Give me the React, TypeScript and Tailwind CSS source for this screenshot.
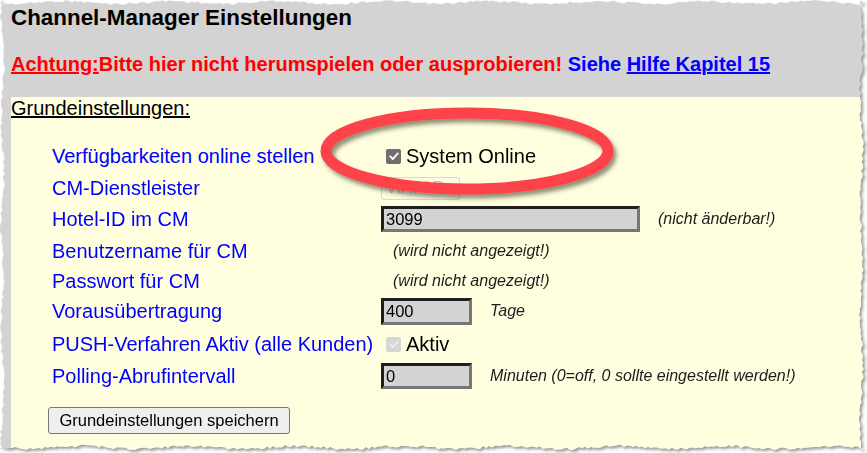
import type { ReactNode } from "react"

// deterministic noise for the torn paper edge
function noise(i: number) {
  const x = Math.sin(i * 12.9898 + 78.233) * 43758.5453
  return x - Math.floor(x)
}

function tornEdge(w: number, h: number) {
  const pts: string[] = []
  let k = 0
  const jag = (t: number, seed: number) =>
    2.6 + 1.4 * Math.sin(t / 17 + seed) + (noise(k++) - 0.5) * 2.6
  for (let x = 0; x <= w; x += 3) pts.push(`${x}px ${jag(x, 1).toFixed(1)}px`)
  for (let y = 0; y <= h; y += 3) pts.push(`${(w - jag(y, 2)).toFixed(1)}px ${y}px`)
  for (let x = w; x >= 0; x -= 3) pts.push(`${x}px ${(h - jag(x, 3)).toFixed(1)}px`)
  for (let y = h; y >= 0; y -= 3) pts.push(`${jag(y, 4).toFixed(1)}px ${y}px`)
  return `polygon(${pts.join(",")})`
}

function Row({ h, label, children }: { h: string; label: string; children?: ReactNode }) {
  return (
    <div className={`flex items-center ${h}`}>
      <div className="w-[329px] text-[20px] leading-[23px] text-[#0000ff]">{label}</div>
      <div className="flex items-center">{children}</div>
    </div>
  )
}

function Note({ children, className = "" }: { children: ReactNode; className?: string }) {
  return <span className={`text-[16px] italic leading-[18px] text-[#1c1c1c] ${className}`}>{children}</span>
}

function Check({ disabled = false }: { disabled?: boolean }) {
  return (
    <span
      className={`ml-[5px] flex size-[15px] items-center justify-center rounded-[2px] ${
        disabled ? "bg-[#d6d6d6]" : "bg-[#6f6f6f]"
      }`}
    >
      <svg viewBox="0 0 16 16" className="size-[12px]">
        <path
          d="M3 8.5 L6.5 12 L13 4.5"
          fill="none"
          stroke={disabled ? "#ececec" : "#ffffff"}
          strokeWidth="2.4"
          strokeLinecap="round"
          strokeLinejoin="round"
        />
      </svg>
    </span>
  )
}

function Field({ w, h, value }: { w: string; h: string; value: string }) {
  return (
    <div
      className={`${w} ${h} flex items-center border-[3px] border-t-[#1e1e1e] border-l-[#1e1e1e] border-r-[#767676] border-b-[#767676] bg-[#d3d3d3] pl-[2px] text-[16.5px] leading-none text-black`}
    >
      {value}
    </div>
  )
}

export default function App() {
  const clip = tornEdge(864, 450)

  return (
    <div className="min-h-screen bg-white font-['Liberation_Sans',Arial,sans-serif]">
      <div className="h-[450px] w-[864px] drop-shadow-[2px_2px_1.5px_rgba(0,0,0,0.4)]">
        <div className="relative flex h-full w-full flex-col bg-[#d3d3d3]" style={{ clipPath: clip }}>
          <div className="pb-[21px] pl-[11px] pt-[5px]">
            <h1 className="text-[22.4px] font-bold leading-[26px] text-black">Channel-Manager Einstellungen</h1>
            <p className="mt-[22px] text-[20px] font-bold leading-[23px]">
              <span className="text-[#ff0000] underline">Achtung:</span>
              <span className="text-[#ff0000]">Bitte hier nicht herumspielen oder ausprobieren!</span>{" "}
              <span className="text-[#0000ff]">Siehe </span>
              <span className="text-[#0000ff] underline">Hilfe Kapitel 15</span>
            </p>
          </div>

          <div className="ml-[11px] flex-1 bg-[#ffffe0]">
            <div className="text-[20px] leading-[23px] text-black underline">Grundeinstellungen:</div>

            <div className="mt-[20px] pl-[41px]">
              <Row h="h-[32px]" label="Verfügbarkeiten online stellen">
                <Check />
                <span className="ml-[5px] text-[20px] leading-[23px] text-black">System Online</span>
              </Row>
              <Row h="h-[32px]" label="CM-Dienstleister">
                <div className="flex h-[23px] w-[79px] items-center overflow-hidden rounded-[3px] border border-[#76767640] bg-[#efefef30] pl-[4px] text-[16px] text-[#10101040]">
                  VIATOR
                </div>
              </Row>
              <Row h="h-[30px]" label="Hotel-ID im CM">
                <Field w="w-[259px]" h="h-[26px]" value="3099" />
                <Note className="ml-[18px]">(nicht änderbar!)</Note>
              </Row>
              <Row h="h-[34px]" label="Benutzername für CM">
                <Note className="ml-[12px]">(wird nicht angezeigt!)</Note>
              </Row>
              <Row h="h-[26px]" label="Passwort für CM">
                <Note className="ml-[12px]">(wird nicht angezeigt!)</Note>
              </Row>
              <Row h="h-[34px]" label="Vorausübertragung">
                <Field w="w-[91px]" h="h-[27px]" value="400" />
                <Note className="ml-[18px]">Tage</Note>
              </Row>
              <Row h="h-[32px]" label="PUSH-Verfahren Aktiv (alle Kunden)">
                <Check disabled />
                <span className="ml-[5px] text-[20px] leading-[23px] text-black">Aktiv</span>
              </Row>
              <Row h="h-[32px]" label="Polling-Abrufintervall">
                <Field w="w-[91px]" h="h-[26px]" value="0" />
                <Note className="ml-[18px]">Minuten (0=off, 0 sollte eingestellt werden!)</Note>
              </Row>
            </div>

            <button
              type="button"
              className="ml-[37px] mt-[15px] h-[27px] w-[242px] rounded-[3px] border border-[#767676] bg-[#efefef] text-[16.5px] leading-none text-black"
            >
              Grundeinstellungen speichern
            </button>
          </div>

          {/* red marker ellipse drawn over the screenshot */}
          <svg className="pointer-events-none absolute left-0 top-0" width="864" height="450">
            <defs>
              <filter id="sh" x="-10%" y="-30%" width="120%" height="160%">
                <feDropShadow dx="3" dy="4" stdDeviation="2" floodColor="#34341c" floodOpacity="0.55" />
              </filter>
            </defs>
            <ellipse
              cx="467"
              cy="151"
              rx="141"
              ry="38"
              fill="none"
              stroke="#fd4249"
              strokeWidth="11"
              filter="url(#sh)"
            />
          </svg>
        </div>
      </div>
    </div>
  )
}
